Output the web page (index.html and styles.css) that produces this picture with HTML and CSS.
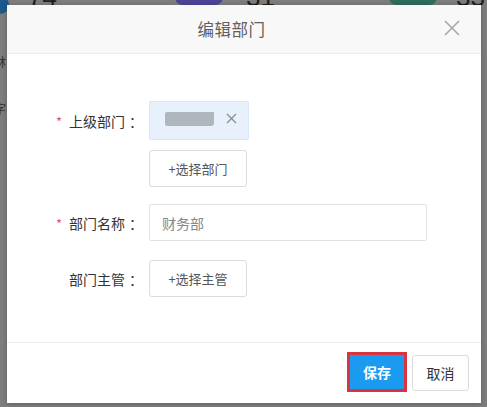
FILE: index.html
```html
<!DOCTYPE html>
<html lang="zh">
<head>
<meta charset="utf-8">
<link rel="stylesheet" href="styles.css">
</head>
<body>
<div class="page">
  <div class="bg-row">
    <span class="bg-dot"></span>
    <span class="bg-num n1">74</span>
    <span class="bg-block purple"></span>
    <span class="bg-num n2">31</span>
    <span class="bg-block green"></span>
    <span class="bg-num n3">33</span>
  </div>
  <div class="bg-side">
    <span class="c1">林</span>
    <span class="c2">字</span>
  </div>

  <div class="dialog">
    <div class="dlg-head">
      <div class="dlg-title">编辑部门</div>
      <svg class="dlg-close" width="16" height="16" viewBox="0 0 16 16"><path d="M1 1L15 15M15 1L1 15" stroke="#a8a8a8" stroke-width="1.6" fill="none"/></svg>
    </div>
    <div class="dlg-body">
      <div class="form-row row-parent">
        <div class="label"><span class="req">*</span>上级部门<span class="colon">：</span></div>
        <div class="ctrl">
          <div class="tag"><span class="tag-blur"></span><svg class="tag-x" width="11" height="11" viewBox="0 0 11 11"><path d="M1 1L10 10M10 1L1 10" stroke="#8c8c8c" stroke-width="1.3" fill="none"/></svg></div>
        </div>
      </div>
      <div class="form-row row-btn">
        <div class="label"></div>
        <div class="ctrl"><div class="btn-sel">+选择部门</div></div>
      </div>
      <div class="form-row row-name">
        <div class="label"><span class="req">*</span>部门名称<span class="colon">：</span></div>
        <div class="ctrl"><div class="input">财务部</div></div>
      </div>
      <div class="form-row row-mgr">
        <div class="label">部门主管<span class="colon">：</span></div>
        <div class="ctrl"><div class="btn-sel">+选择主管</div></div>
      </div>
    </div>
    <div class="dlg-foot">
      <div class="btn-save-wrap"><div class="btn-save">保存</div></div>
      <div class="btn-cancel">取消</div>
    </div>
  </div>
</div>
</body>
</html>
```

FILE: styles.css
```css
* { box-sizing: border-box; }
html, body { margin: 0; padding: 0; }
body {
  width: 487px;
  height: 407px;
  overflow: hidden;
  background: #7e7e7e;
  font-family: "Noto Sans CJK SC", "Noto Sans", sans-serif;
}
.page {
  position: relative;
  width: 487px;
  height: 407px;
  overflow: hidden;
}
.bg-row {
  display: flex;
  align-items: flex-start;
  height: 10px;
  margin-top: -13px;
}
.bg-dot {
  width: 18px;
  height: 18px;
  border-radius: 50%;
  background: #1b5a8a;
  margin-left: -9px;
  margin-top: 9px;
}
.bg-num {
  font-size: 26px;
  line-height: 20px;
  color: #1e1e1e;
  font-family: "Liberation Sans", sans-serif;
}
.n1 { margin-left: 19px; width: 30px; }
.bg-block {
  width: 48px;
  height: 18px;
  border-radius: 0 0 8px 8px;
}
.purple { background: #4c4597; margin-left: 117px; }
.n2 { margin-left: 23px; width: 30px; }
.green { background: #2c6e5e; margin-left: 113px; }
.n3 { margin-left: 19px; }
.bg-side {
  display: flex;
  flex-direction: column;
  font-size: 12px;
  color: #333;
  margin-left: -6px;
  width: 14px;
}
.bg-side .c1 { margin-top: 56px; }
.bg-side .c2 { margin-top: 30px; }

.dialog {
  position: absolute;
  left: 7px;
  top: 5px;
  width: 474px;
  height: 398px;
  background: #fff;
  display: flex;
  flex-direction: column;
  box-shadow: 0 1px 6px rgba(0,0,0,0.25);
}
.dlg-head {
  height: 49px;
  flex: none;
  background: #f8f8f9;
  border-bottom: 1px solid #ececec;
  display: flex;
  align-items: center;
  padding: 0 21px 0 0;
}
.dlg-title {
  flex: 1;
  text-align: center;
  font-size: 16.5px;
  color: #606060;
  padding-left: 12px;
  letter-spacing: 0.5px;
}
.dlg-close { flex: none; margin-top: -2px; }

.dlg-body {
  flex: 1;
  padding-top: 47px;
}
.form-row {
  display: flex;
  align-items: center;
}
.label {
  width: 133px;
  flex: none;
  text-align: right;
  font-size: 14px;
  color: #333;
  padding-right: 0;
}
.colon {
  display: inline-block;
  width: 15px;
  padding-left: 4px;
  text-align: left;
}
.req {
  color: #e05a5a;
  font-size: 13px;
  margin-right: 7px;
}
.ctrl {
  margin-left: 9px;
}
.tag {
  width: 100px;
  height: 39px;
  background: #e7f0fb;
  border: 1px solid #d8e6f6;
  border-radius: 2px;
  display: flex;
  align-items: center;
  padding-left: 15px;
}
.tag-blur {
  width: 49px;
  height: 14px;
  background: #b0b6bd;
  border-radius: 2px 1px 3px 2px;
  margin-top: -4px;
}
.tag-x { margin-left: 12px; margin-top: -4px; }
.row-btn { margin-top: 10px; }
.btn-sel {
  width: 98px;
  height: 37px;
  border: 1px solid #dcdcdc;
  border-radius: 3px;
  display: flex;
  align-items: center;
  justify-content: center;
  font-size: 13px;
  color: #555;
  background: #fff;
}
.row-name { margin-top: 17px; }
.input {
  width: 278px;
  height: 37px;
  border: 1px solid #e2e2e2;
  border-radius: 2px;
  display: flex;
  align-items: center;
  padding-left: 12px;
  font-size: 14px;
  color: #888;
}
.row-mgr { margin-top: 19px; }

.dlg-foot {
  height: 61px;
  flex: none;
  border-top: 1px solid #ececec;
  display: flex;
  justify-content: flex-end;
  align-items: flex-start;
  padding-right: 12px;
  padding-top: 12px;
  padding-bottom: 10px;
}
.btn-save-wrap {
  border: 3px solid #d9343f;
  width: 60px;
  height: 40px;
  margin-top: -3px;
}
.btn-save {
  width: 100%;
  height: 100%;
  background: #1a9bf0;
  color: #fff;
  font-weight: bold;
  font-size: 14px;
  display: flex;
  align-items: center;
  justify-content: center;
}
.btn-cancel {
  margin-left: 5px;
  width: 57px;
  height: 36px;
  border: 1px solid #dcdcdc;
  border-radius: 3px;
  display: flex;
  align-items: center;
  justify-content: center;
  font-size: 14px;
  color: #333;
  background: #fff;
}
```
